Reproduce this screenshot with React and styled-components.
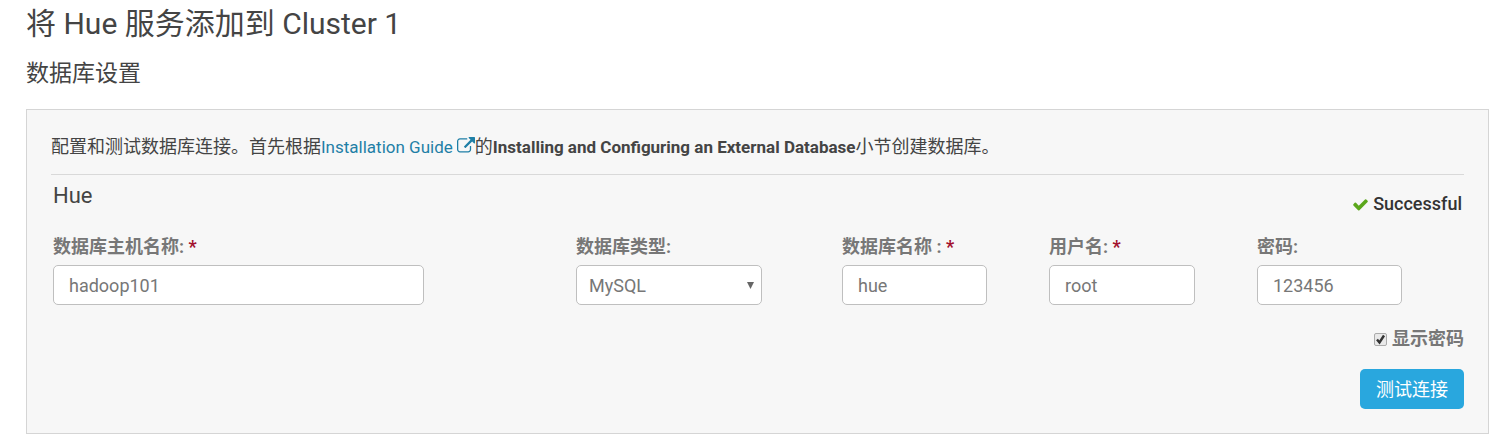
/*
Add Service Wizard :: Database Setup (Hue)
*/
import React, { useState } from 'react';
import styled, { createGlobalStyle } from 'styled-components';

const GlobalStyle = createGlobalStyle`
  * { box-sizing: border-box; }

  body {
    margin: 0;
    background-color: #FFFFFF;
    color: #444444;
    font-family: Roboto, "Noto Sans CJK SC", sans-serif;
    font-size: 18px;
    line-height: 24px;
  }

  input, select, button { font: inherit; }
`;

const Page = styled.main`
  padding: 4px 0 8px 26px;
`;

const Title = styled.h1`
  margin: 0;
  font-size: 30px;
  font-weight: 400;
  line-height: 40px;
`;

const SubTitle = styled.h2`
  margin: 14px 0 0;
  font-size: 23px;
  font-weight: 400;
  line-height: 32px;
`;

const Panel = styled.section`
  margin-top: 19px;
  padding: 24px;
  border: 1px solid #D5D5D5;
  background-color: #F7F7F7;
`;

const Description = styled.p`
  margin: 0;
  padding: 1px 0 15px;
  border-bottom: 1px solid #D9D9D9;

  a, strong { font-size: 17px; }
`;

const GuideLink = styled.a`
  color: #1F7FA6;
  text-decoration: none;

  svg {
    width: 18px;
    height: 18px;
    margin-left: 4px;
    vertical-align: -2px;
    fill: currentColor;
  }
`;

const ServiceHead = styled.header`
  display: flex;
  justify-content: space-between;
  align-items: flex-end;
  height: 41px;
  padding: 0 2px;
`;

const ServiceName = styled.h3`
  margin: 0;
  align-self: flex-start;
  font-size: 22px;
  font-weight: 400;
  line-height: 42px;
`;

const Status = styled.strong`
  display: flex;
  align-items: center;
  gap: 4px;
  font-size: 18px;
  font-weight: 500;
  color: #333333;

  svg {
    width: 17px;
    height: 17px;
    fill: #5BA71B;
  }
`;

const Fields = styled.div`
  display: grid;
  grid-template-columns: 523fr 266fr 207fr 208fr 207fr;
  margin-top: 19px;
  padding-left: 2px;
`;

const Label = styled.label`
  display: block;
  margin-bottom: 6px;
  font-weight: 700;
  color: #777777;
`;

const Required = styled.span`
  color: #A3112E;
`;

const TextInput = styled.input`
  display: block;
  width: ${({ $wide }) => ($wide ? '71%' : '70%')};
  height: 40px;
  padding: 0 15px;
  border: 1px solid #BFBFBF;
  border-radius: 5px;
  background-color: #FFFFFF;
  color: #777777;
`;

const SelectBox = styled.div`
  display: grid;
  align-items: center;
  width: 70%;

  select, svg { grid-area: 1 / 1; }

  select {
    width: 100%;
    height: 40px;
    padding: 1px 12px 0;
    border: 1px solid #BFBFBF;
    border-radius: 5px;
    background-color: #FFFFFF;
    color: #777777;
    appearance: none;
  }

  svg {
    width: 7px;
    height: 7px;
    margin-right: 8px;
    justify-self: end;
    fill: #666666;
    pointer-events: none;
  }
`;

const Actions = styled.div`
  display: flex;
  flex-direction: column;
  align-items: flex-end;
  gap: 18px;
  margin-top: 22px;
`;

const CheckLabel = styled.label`
  display: flex;
  align-items: center;
  gap: 5px;
  font-weight: 700;
  color: #777777;
`;

const CheckBox = styled.span`
  display: grid;

  input, svg { grid-area: 1 / 1; }

  input {
    width: 13px;
    height: 13px;
    margin: 0;
    border: 1px solid #ABABAB;
    border-radius: 2px;
    background-color: #E9E9E9;
    appearance: none;
  }

  svg {
    width: 13px;
    height: 13px;
    fill: none;
    stroke: #333333;
    stroke-width: 2.4;
    pointer-events: none;
  }
`;

const TestButton = styled.button`
  height: 40px;
  padding: 1px 16px 0;
  border: 0;
  border-radius: 5px;
  background-color: #29A7DE;
  color: #FFFFFF;
`;

const ExternalIcon = () => (
  <svg viewBox="0 0 1792 1792" aria-hidden="true">
    <path d="M1408 928v320q0 119-84.5 203.5t-203.5 84.5h-832q-119 0-203.5-84.5t-84.5-203.5v-832q0-119 84.5-203.5t203.5-84.5h704q14 0 23 9t9 23v64q0 14-9 23t-23 9h-704q-66 0-113 47t-47 113v832q0 66 47 113t113 47h832q66 0 113-47t47-113v-320q0-14 9-23t23-9h64q14 0 23 9t9 23zm384-864v512q0 26-19 45t-45 19-45-19l-176-176-652 652q-10 10-23 10t-23-10l-114-114q-10-10-10-23t10-23l652-652-176-176q-19-19-19-45t19-45 45-19h512q26 0 45 19t19 45z" />
  </svg>
);

const CheckIcon = () => (
  <svg viewBox="0 0 1792 1792" aria-hidden="true">
    <path d="M1671 566q0 40-28 68l-724 724-136 136q-28 28-68 28t-68-28l-136-136-362-362q-28-28-28-68t28-68l136-136q28-28 68-28t68 28l294 295 656-657q28-28 68-28t68 28l136 136q28 28 28 68z" />
  </svg>
);

const Field = ({ id, label, required, children }) => (
  <div>
    <Label htmlFor={id}>
      {label}
      {required && <Required> *</Required>}
    </Label>
    {children}
  </div>
);

const App = () => {
  const [showPassword, setShowPassword] = useState(true);

  return (
    <>
      <GlobalStyle />
      <Page>
        <Title>将 Hue 服务添加到 Cluster 1</Title>
        <SubTitle>数据库设置</SubTitle>

        <Panel>
          <Description>
            配置和测试数据库连接。首先根据
            <GuideLink href="#guide">Installation Guide<ExternalIcon /></GuideLink>
            的<strong>Installing and Configuring an External Database</strong>小节创建数据库。
          </Description>

          <ServiceHead>
            <ServiceName>Hue</ServiceName>
            <Status><CheckIcon />Successful</Status>
          </ServiceHead>

          <Fields>
            <Field id="host" label="数据库主机名称:" required>
              <TextInput id="host" $wide defaultValue="hadoop101" />
            </Field>
            <Field id="type" label="数据库类型:">
              <SelectBox>
                <select id="type" defaultValue="MySQL">
                  <option>MySQL</option>
                  <option>PostgreSQL</option>
                  <option>Oracle</option>
                </select>
                <svg viewBox="0 0 7 7" aria-hidden="true"><path d="M0 0h7L3.5 7z" /></svg>
              </SelectBox>
            </Field>
            <Field id="name" label="数据库名称 :" required>
              <TextInput id="name" defaultValue="hue" />
            </Field>
            <Field id="user" label="用户名:" required>
              <TextInput id="user" defaultValue="root" />
            </Field>
            <Field id="password" label="密码:">
              <TextInput id="password" type={showPassword ? 'text' : 'password'} defaultValue="123456" />
            </Field>
          </Fields>

          <Actions>
            <CheckLabel>
              <CheckBox>
                <input
                  type="checkbox"
                  checked={showPassword}
                  onChange={(e) => setShowPassword(e.target.checked)}
                />
                {showPassword && <svg viewBox="0 0 13 13" aria-hidden="true"><path d="M3 6.5l2.5 3 4.5-7" /></svg>}
              </CheckBox>
              显示密码
            </CheckLabel>
            <TestButton type="button">测试连接</TestButton>
          </Actions>
        </Panel>
      </Page>
    </>
  )
}

export default App;
